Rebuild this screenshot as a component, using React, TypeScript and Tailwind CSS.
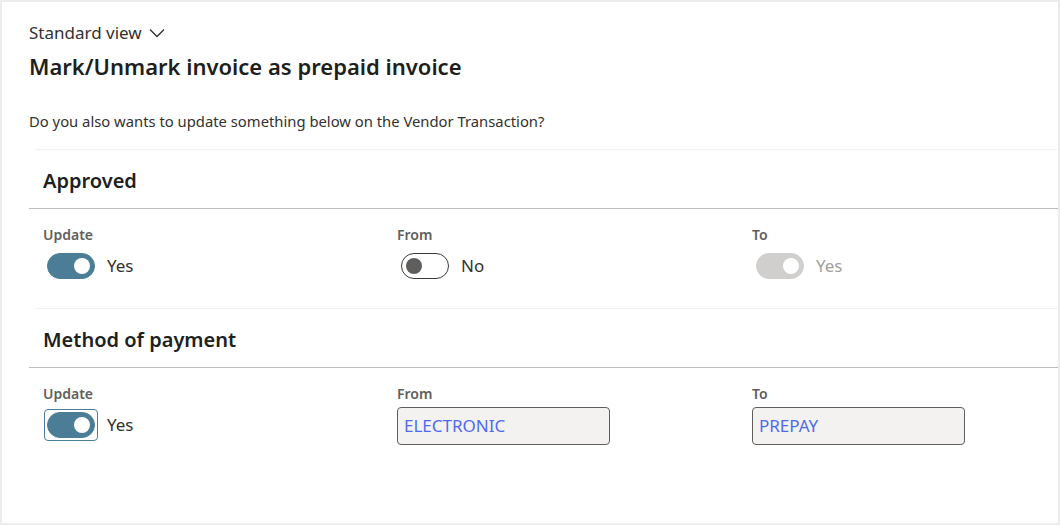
type ToggleProps = {
  on: boolean;
  disabled?: boolean;
  focused?: boolean;
};

function Toggle({ on, disabled, focused }: ToggleProps) {
  const track = disabled
    ? 'bg-[#d0cfce] border-[#d0cfce]'
    : on
      ? 'bg-[#4b7e96] border-[#4b7e96]'
      : 'bg-white border-[#3b3a39]';
  const knob = on ? 'bg-white ml-auto' : 'bg-[#605e5c]';

  return (
    <span
      className={
        'inline-flex rounded-[4px] p-[2px] -m-[3px] border ' +
        (focused ? 'border-[#4b7e96]' : 'border-transparent')
      }
    >
      <span className={'flex items-center w-[48px] h-[26px] rounded-full border px-[4px] ' + track}>
        <span className={'w-[16px] h-[16px] rounded-full ' + knob} />
      </span>
    </span>
  );
}

function ToggleField({ label, on, disabled, focused }: ToggleProps & { label: string }) {
  return (
    <div>
      <div className="text-[14px] leading-[20px] font-semibold text-[#605e5c]">{label}</div>
      <div className="flex items-center gap-[12px] mt-[8px] ml-[4px]">
        <Toggle on={on} disabled={disabled} focused={focused} />
        <span className={'text-[17px] leading-[22px] ' + (disabled ? 'text-[#a19f9d]' : 'text-[#323130]')}>
          {on ? 'Yes' : 'No'}
        </span>
      </div>
    </div>
  );
}

function TextField({ label, value }: { label: string; value: string }) {
  return (
    <div>
      <div className="text-[14px] leading-[20px] font-semibold text-[#605e5c]">{label}</div>
      <div className="mt-[3px] w-[213px] h-[38px] rounded-[4px] border border-[#605e5c] bg-[#f3f2f1] flex items-center px-[6px]">
        <span className="text-[17px] text-[#4f6bed]">{value}</span>
      </div>
    </div>
  );
}

function Section({ title, children }: { title: string; children: React.ReactNode }) {
  return (
    <div>
      <div className="ml-[6px] h-px bg-[#f3f3f3]" />
      <div className="pl-[14px] pt-[18px] pb-[14px] text-[20px] leading-[26px] font-semibold text-[#201f1e]">
        {title}
      </div>
      <div className="h-px bg-[#bdbdbd]" />
      <div className="grid grid-cols-[354px_355px_1fr] pl-[14px] pt-[16px] pb-[29px]">{children}</div>
    </div>
  );
}

export default function App() {
  return (
    <div
      className="w-[1060px] h-[525px] bg-white border-2 border-[#ececec] text-[#323130]"
      style={{ fontFamily: '"Segoe UI", "Noto Sans", "Open Sans", sans-serif' }}
    >
      <div className="pl-[27px] pt-[20px]">
        <button className="flex items-center gap-[7px] text-[17px] leading-[22px] text-[#323130]">
          Standard view
          <svg width="16" height="10" viewBox="0 0 16 10" fill="none" stroke="currentColor" strokeWidth="1.3">
            <polyline points="1,1.5 8,8.5 15,1.5" />
          </svg>
        </button>
        <h1 className="mt-[7px] text-[22px] leading-[30px] font-semibold text-[#201f1e]">
          Mark/Unmark invoice as prepaid invoice
        </h1>
        <p className="mt-[30px] text-[14.8px] leading-[20px] text-[#323130]">
          Do you also wants to update something below on the Vendor Transaction?
        </p>

        <div className="mt-[18px]">
          <Section title="Approved">
            <ToggleField label="Update" on />
            <ToggleField label="From" on={false} />
            <ToggleField label="To" on disabled />
          </Section>
          <Section title="Method of payment">
            <ToggleField label="Update" on focused />
            <TextField label="From" value="ELECTRONIC" />
            <TextField label="To" value="PREPAY" />
          </Section>
        </div>
      </div>
    </div>
  );
}
